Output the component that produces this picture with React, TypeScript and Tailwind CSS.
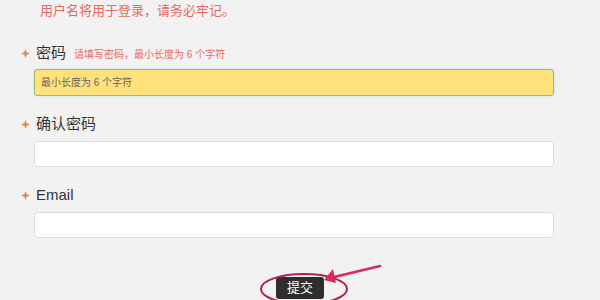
import React from 'react';

const Star = () => (
  <svg width="9" height="9" viewBox="0 0 10 10" className="shrink-0">
    <path d="M5 0 L6.4 3.6 L10 5 L6.4 6.4 L5 10 L3.6 6.4 L0 5 L3.6 3.6 Z" fill="#e8894e" />
  </svg>
);

type FieldProps = {
  label: string;
  hint?: string;
  placeholder?: string;
  warn?: boolean;
};

function Field({ label, hint, placeholder, warn }: FieldProps) {
  return (
    <div>
      <div className="flex items-center h-[24px] pl-[21px]">
        <Star />
        <span className="ml-[6px] text-[15px] text-[#333]">{label}</span>
        {hint && <span className="ml-[8px] text-[10px] text-[#e46a66] mt-[2px]">{hint}</span>}
      </div>
      <div
        className={
          warn
            ? 'ml-[34px] mt-[4px] w-[520px] h-[27px] rounded-[3px] border border-[#aab467] bg-[#ffe27c] shadow-[0_0_3px_#bfe6f2] flex items-center pl-[6px] text-[10px] text-[#666]'
            : 'ml-[34px] mt-[5px] w-[520px] h-[26px] rounded-[4px] border border-[#dcdcdc] bg-white flex items-center pl-[6px] text-[10px] text-[#666]'
        }
      >
        {placeholder}
      </div>
    </div>
  );
}

export default function App() {
  return (
    <div className="relative w-[600px] h-[300px] overflow-hidden bg-[#f2f2f2] font-['Liberation_Sans','Noto_Sans_CJK_SC',sans-serif]">
      <p className="pl-[40px] pt-[2px] text-[13px] leading-[18px] text-[#e26a5e]">用户名将用于登录，请务必牢记。</p>
      <div className="mt-[21px] flex flex-col gap-[16px]">
        <Field label="密码" hint="请填写密码，最小长度为 6 个字符" placeholder="最小长度为 6 个字符" warn />
        <Field label="确认密码" />
        <Field label="Email" />
      </div>
      <div className="mt-[39px] flex justify-center">
        <button className="h-[22px] px-[11px] rounded-[3px] bg-[#2e2e2e] text-white text-[13px] leading-[22px]">提交</button>
      </div>
      <svg className="absolute left-0 top-0 pointer-events-none" width="600" height="300" viewBox="0 0 600 300">
        <ellipse cx="304" cy="289" rx="43" ry="15" fill="none" stroke="#b3204c" strokeWidth="2" />
        <line x1="380" y1="266" x2="330" y2="278" stroke="#d92a5a" strokeWidth="2.5" strokeLinecap="round" />
        <path d="M324 280 L333 269 L336 283 Z" fill="#d92a5a" />
      </svg>
    </div>
  );
}
